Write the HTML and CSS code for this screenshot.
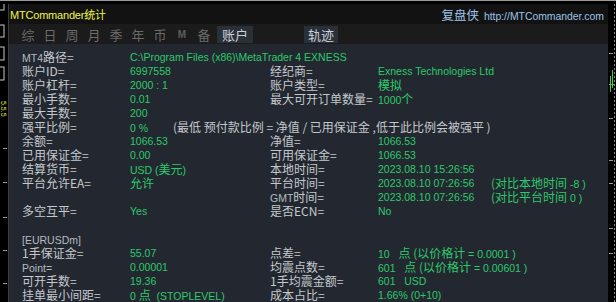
FILE: index.html
```html
<!DOCTYPE html>
<html lang="zh">
<head>
  <meta charset="UTF-8">
  <title>MTCommander统计</title>
  <link rel="stylesheet" href="styles.css">
</head>
<body>
  <div class="screen">
    <!-- chart edge on the left -->
    <svg class="edge-left" width="9" height="298" viewBox="0 0 9 298">
      <rect x="-4" y="-3" width="8" height="9" fill="none" stroke="#c8c8c8" />
      <rect x="-4" y="21" width="8" height="12" fill="none" stroke="#c8c8c8" />
      <rect x="-4" y="43" width="8" height="13" fill="none" stroke="#c8c8c8" />
      <rect x="-4" y="63" width="8" height="13" fill="none" stroke="#c8c8c8" />
      <text x="97" y="-1" fill="#e8e840" font-size="7" transform="rotate(90)" font-family="Liberation Sans">5.5.5</text>
      <g stroke="#9a9a9a">
        <line x1="3" y1="144.5" x2="7" y2="144.5" />
        <line x1="3" y1="178.5" x2="7" y2="178.5" />
        <line x1="3" y1="213.5" x2="7" y2="213.5" />
        <line x1="3" y1="246.5" x2="7" y2="246.5" />
        <line x1="3" y1="279.5" x2="7" y2="279.5" />
      </g>
      <line x1="8.5" y1="0" x2="8.5" y2="298" stroke="#3c3c3c" />
    </svg>

    <div class="panel">
      <div class="titlebar">
        <span class="title">MTCommander统计</span>
        <span class="site"><span class="zh">复盘侠</span> http://MTCommander.com</span>
      </div>

      <div class="tabs">
        <span class="tab">综</span>
        <span class="tab">日</span>
        <span class="tab">周</span>
        <span class="tab">月</span>
        <span class="tab">季</span>
        <span class="tab">年</span>
        <span class="tab">币</span>
        <span class="tab tab-m">M</span>
        <span class="tab">备</span>
        <span class="tab-box">账户</span>
        <span class="tab-box tab-far">轨迹</span>
      </div>

      <div class="content">
        <div class="row"><span class="k"><span class="en">MT4</span>路径=</span><span class="v">C:\Program Files (x86)\MetaTrader 4 EXNESS</span></div>
        <div class="row"><span class="k">账户ID=</span><span class="v">6997558</span><span class="k">经纪商=</span><span class="v">Exness Technologies Ltd</span></div>
        <div class="row"><span class="k">账户杠杆=</span><span class="v">2000 : 1</span><span class="k">账户类型=</span><span class="v"><span class="zh">模拟</span></span></div>
        <div class="row"><span class="k">最小手数=</span><span class="v">0.01</span><span class="k">最大可开订单数量=</span><span class="v">1000<span class="zh">个</span></span></div>
        <div class="row"><span class="k">最大手数=</span><span class="v">200</span></div>
        <div class="row"><span class="k">强平比例=</span><span class="v"><span class="pct">0 %</span><span class="note">(最低 预付款比例 = 净值 / 已用保证金 ,低于此比例会被强平 )</span></span></div>
        <div class="row"><span class="k">余额=</span><span class="v">1066.53</span><span class="k">净值=</span><span class="v">1066.53</span></div>
        <div class="row"><span class="k">已用保证金=</span><span class="v">0.00</span><span class="k">可用保证金=</span><span class="v">1066.53</span></div>
        <div class="row"><span class="k">结算货币=</span><span class="v">USD (<span class="zh">美元</span>)</span><span class="k">本地时间=</span><span class="v">2023.08.10 15:26:56</span></div>
        <div class="row"><span class="k">平台允许EA=</span><span class="v"><span class="zh">允许</span></span><span class="k">平台时间=</span><span class="v">2023.08.10 07:26:56</span><span class="v"><span class="zh">(对比本地时间</span> -8 )</span></div>
        <div class="row"><span class="k"></span><span class="v"></span><span class="k"><span class="en">GMT</span>时间=</span><span class="v">2023.08.10 07:26:56</span><span class="v"><span class="zh">(对比平台时间</span> 0 )</span></div>
        <div class="row"><span class="k">多空互平=</span><span class="v">Yes</span><span class="k">是否ECN=</span><span class="v">No</span></div>
        <div class="row"></div>
        <div class="row"><span class="k"><span class="en">[EURUSDm]</span></span></div>
        <div class="row"><span class="k">1手保证金=</span><span class="v">55.07</span><span class="k">点差=</span><span class="v">10   <span class="zh">点 (以价格计</span> = 0.0001 )</span></div>
        <div class="row"><span class="k"><span class="en">Point=</span></span><span class="v">0.00001</span><span class="k">均震点数=</span><span class="v">601   <span class="zh">点 (以价格计</span> = 0.00601 )</span></div>
        <div class="row"><span class="k">可开手数=</span><span class="v">19.36</span><span class="k">1手均震金额=</span><span class="v">601   USD</span></div>
        <div class="row"><span class="k">挂单最小间距=</span><span class="v">0 <span class="zh">点</span>  (STOPLEVEL)</span><span class="k">成本占比=</span><span class="v">1.66% (0+10)</span></div>
      </div>
    </div>

    <!-- chart edge on the right -->
    <svg class="edge-right" width="8" height="298" viewBox="0 0 8 298">
      <line x1="6.5" y1="0" x2="6.5" y2="298" stroke="#8a8a8a" stroke-dasharray="2 2" />
      <g stroke="#9a9a9a">
        <line x1="1" y1="49.5" x2="5" y2="49.5" />
        <line x1="1" y1="114.5" x2="5" y2="114.5" />
        <line x1="1" y1="156.5" x2="5" y2="156.5" />
        <line x1="1" y1="179.5" x2="5" y2="179.5" />
        <line x1="1" y1="224.5" x2="5" y2="224.5" />
        <line x1="1" y1="249.5" x2="5" y2="249.5" />
      </g>
      <g stroke="#2fd44a">
        <line x1="2.5" y1="72" x2="2.5" y2="88" />
        <line x1="4.5" y1="66" x2="4.5" y2="84" />
        <line x1="1" y1="80.5" x2="6" y2="80.5" />
      </g>
    </svg>
  </div>
</body>
</html>
```

FILE: styles.css
```css
body {
  margin: 0;
  background: #000;
  font-family: "Liberation Sans", "Noto Sans CJK SC", sans-serif;
  font-size: 11px;
  overflow: hidden;
}

.screen {
  display: flex;
  width: 616px;
  height: 302px;
  border-top: 1px solid #9a9a9a;
  padding-top: 3px;
  box-sizing: border-box;
  overflow: hidden;
}

.edge-left,
.edge-right {
  flex: none;
  display: block;
}

.panel {
  flex: 1;
  display: flex;
  flex-direction: column;
  min-width: 0;
}

.titlebar {
  height: 21px;
  background: #121212;
  display: flex;
  align-items: center;
  justify-content: space-between;
  padding: 0 4px 0 1px;
}

.title {
  color: #f2f24a;
  font-size: 11px;
  letter-spacing: -0.2px;
}

.zh,
.k {
  font-family: "Noto Sans CJK SC", "Liberation Sans", sans-serif;
}

.site {
  color: #9ec3e6;
  font-size: 10.4px;
}

.site .zh {
  font-size: 12.5px;
  margin-right: 2px;
}

.tabs {
  height: 20px;
  background: #1b1b1b;
  display: flex;
  align-items: center;
  padding-left: 8px;
  font-family: "Noto Sans CJK SC", sans-serif;
  font-size: 13px;
}

.tab {
  width: 22px;
  text-align: center;
  color: #6a6a6a;
}

.tab-m {
  font-family: "Liberation Sans", sans-serif;
  font-size: 10px;
  font-weight: bold;
  color: #5e5e5e;
}

.tab-box {
  background: #2a3038;
  color: #c9d0d8;
  height: 17px;
  line-height: 17px;
  padding: 0 5px;
  margin-left: 2px;
}

.tab-far {
  margin-left: 51px;
  padding: 0 4px;
}

.content {
  flex: 1;
  background: #232830;
  padding: 6px 0 0 13px;
}

.row {
  display: grid;
  grid-template-columns: 108px 140px 108px 113px 1fr;
  height: 14px;
  line-height: 14px;
  white-space: pre;
}

.k {
  color: #c4c8cd;
  font-size: 12px;
}

.en {
  font-family: "Liberation Sans", sans-serif;
  font-size: 10.5px;
  color: #b4bac1;
}

.v {
  color: #2cc86c;
  font-size: 10.5px;
}

.v .zh {
  font-size: 12px;
}

.pct {
  display: inline-block;
  width: 43px;
}

.note {
  color: #c4c8cd;
  font-family: "Noto Sans CJK SC", "Liberation Sans", sans-serif;
  font-size: 12px;
}
```
